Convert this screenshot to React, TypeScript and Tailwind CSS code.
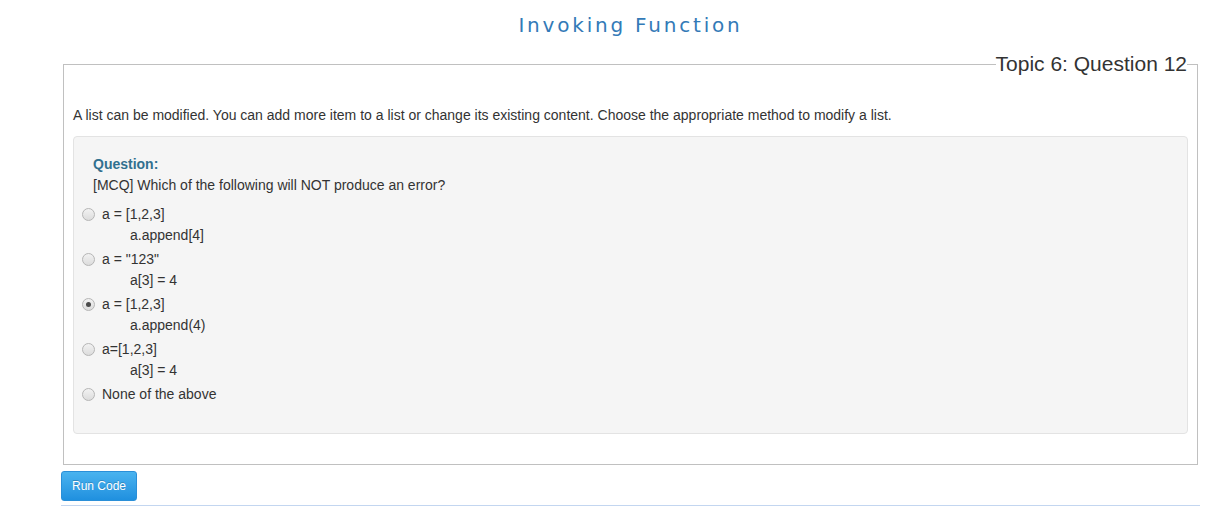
const options = [
  { lines: ["a = [1,2,3]", "a.append[4]"], checked: false },
  { lines: ['a = "123"', "a[3] = 4"], checked: false },
  { lines: ["a = [1,2,3]", "a.append(4)"], checked: true },
  { lines: ["a=[1,2,3]", "a[3] = 4"], checked: false },
  { lines: ["None of the above"], checked: false },
];

const Radio = ({ checked }: { checked: boolean }) => (
  <span className="mt-[4px] flex size-[13px] shrink-0 items-center justify-center rounded-full border border-[#b5b5b5] bg-gradient-to-b from-[#f2f2f2] to-[#dcdcdc]">
    {checked && <span className="size-[5px] rounded-full bg-[#4a4a4a]" />}
  </span>
);

export default function App() {
  return (
    <div className="min-h-screen bg-white font-['Liberation_Sans',Arial,sans-serif] text-[14px] text-[#333]">
      <div className="mx-[61px] w-[1139px]">
        <h1 className="pt-[12px] text-center font-['DejaVu_Sans',Verdana,sans-serif] text-[20px] leading-[26px] tracking-[2.8px] text-[#337ab7]">
          Invoking Function
        </h1>

        <fieldset className="mx-[2px] mt-[14px] border border-[#c0c0c0] px-[9px] pb-[30px]">
          <legend className="ml-auto mr-[1px] text-[21px] leading-[24px] text-[#333]">
            Topic 6: Question 12
          </legend>
          <p className="mt-[29px] leading-[20px]">
            A list can be modified. You can add more item to a list or change its existing content. Choose the appropriate method to modify a list.
          </p>

          <div className="mt-[11px] rounded-[4px] border border-[#e3e3e3] bg-[#f5f5f5] px-[19px] pb-[28px] pt-[17px]">
            <div className="font-bold leading-[20px] text-[#31708f]">Question:</div>
            <div className="mt-[1px] leading-[20px]">
              [MCQ] Which of the following will NOT produce an error?
            </div>

            <div className="mt-[9px] -ml-[11px] flex flex-col gap-[3px]">
              {options.map((opt, i) => (
                <label key={i} className="flex gap-[7px]">
                  <Radio checked={opt.checked} />
                  <div className="flex flex-col">
                    {opt.lines.map((line, j) => (
                      <span
                        key={j}
                        className={j === 0 ? "leading-[21px]" : "pl-[28px] leading-[21px]"}
                      >
                        {line}
                      </span>
                    ))}
                  </div>
                </label>
              ))}
            </div>
          </div>
        </fieldset>

        <button className="mt-[6px] h-[30px] w-[76px] rounded-[3px] border border-[#2a8fd8] bg-gradient-to-b from-[#49b3ef] to-[#1f90df] text-[12px] text-white [text-shadow:0_-1px_0_rgba(0,0,0,0.2)]">
          Run Code
        </button>
        <div className="mt-[4px] h-px bg-[#c3d6f0]" />
      </div>
    </div>
  );
}
